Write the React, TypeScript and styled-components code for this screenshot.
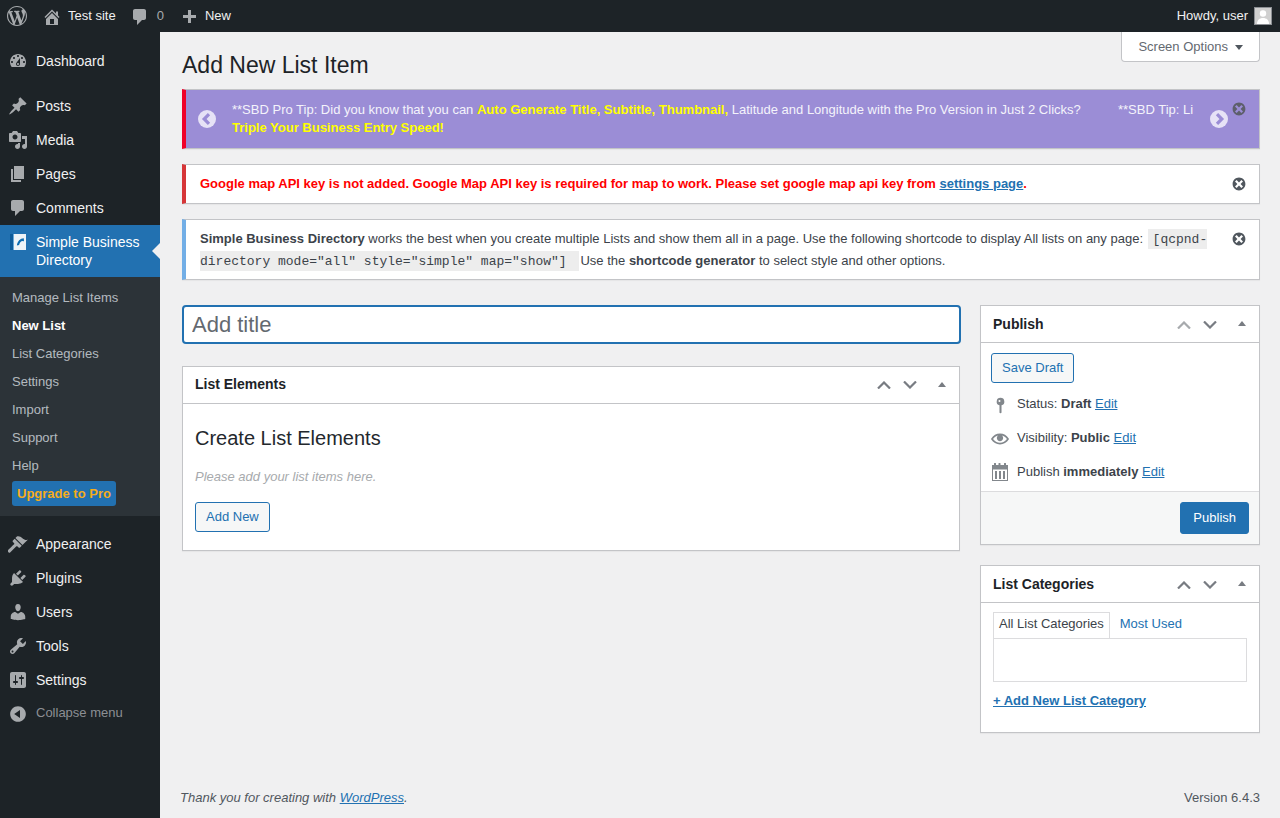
import React from 'react';
import styled, { createGlobalStyle } from 'styled-components';

const GlobalStyle = createGlobalStyle`
    html, body {
        margin: 0;
        padding: 0;
        background: #f0f0f1;
        color: #3c434a;
        font-family: "Liberation Sans", Arial, sans-serif;
        font-size: 13px;
        line-height: 1.4;
        overflow: hidden;
    }
    * { box-sizing: border-box; }
    a { color: #2271b1; }
`;

const paths = {
    logo: 'M20 10c0-5.51-4.49-10-10-10C4.48 0 0 4.49 0 10c0 5.52 4.48 10 10 10 5.51 0 10-4.48 10-10zM7.78 15.37L4.37 6.22c.55-.02 1.17-.08 1.17-.08.5-.06.44-1.13-.06-1.11 0 0-1.45.11-2.37.11-.18 0-.37 0-.58-.01C4.12 2.69 6.87 1.11 10 1.11c2.33 0 4.45.87 6.05 2.34-.68-.11-1.65.39-1.65 1.58 0 .74.45 1.36.9 2.1.35.61.55 1.36.55 2.46 0 1.49-1.4 5-1.4 5l-3.03-8.37c.54-.02.82-.17.82-.17.5-.05.44-1.25-.06-1.22 0 0-1.44.12-2.38.12-.87 0-2.33-.12-2.33-.12-.5-.03-.56 1.2-.06 1.22l.92.08 1.26 3.41zM17.41 10c.24-.64.74-1.87.43-4.25.7 1.29 1.05 2.71 1.05 4.25 0 3.29-1.73 6.24-4.4 7.78.97-2.59 1.94-5.2 2.92-7.78zM6.1 18.09C3.12 16.65 1.11 13.53 1.11 10c0-1.3.23-2.48.72-3.59C3.25 10.3 4.67 14.2 6.1 18.09zm4.03-6.63l2.58 6.98c-.86.29-1.76.45-2.71.45-.79 0-1.57-.11-2.29-.33.81-2.38 1.62-4.74 2.42-7.1z',
    home: 'M16 8.5l1.53 1.53-1.06 1.06L10 4.62l-6.47 6.47-1.06-1.06L10 2.5l4 4v-2h2v4zm-6-2.46l6 5.99V18H4v-5.97zM12 17v-5H8v5h4z',
    comment: 'M5 2h9c1.1 0 2 .9 2 2v7c0 1.1-.9 2-2 2h-2l-5 5v-5H5c-1.1 0-2-.9-2-2V4c0-1.1.9-2 2-2z',
    plus: 'M17 7v3h-5v5H9v-5H4V7h5V2h3v5h5z',
    dashboard: 'M3.76 16h12.48c1.1-1.37 1.76-3.11 1.76-5 0-4.42-3.58-8-8-8s-8 3.58-8 8c0 1.89.66 3.63 1.76 5zM10 4c.55 0 1 .45 1 1s-.45 1-1 1-1-.45-1-1 .45-1 1-1zM6 6c.55 0 1 .45 1 1s-.45 1-1 1-1-.45-1-1 .45-1 1-1zm8 0c.55 0 1 .45 1 1s-.45 1-1 1-1-.45-1-1 .45-1 1-1zm-5.37 5.55L12 7v6c0 1.1-.9 2-2 2s-2-.9-2-2c0-.57.24-1.08.63-1.45zM4 10c.55 0 1 .45 1 1s-.45 1-1 1-1-.45-1-1 .45-1 1-1zm12 0c.55 0 1 .45 1 1s-.45 1-1 1-1-.45-1-1 .45-1 1-1zm-5 3c0-.55-.45-1-1-1s-1 .45-1 1 .45 1 1 1 1-.45 1-1z',
    post: 'M10.44 3.02l1.82-1.82 6.36 6.35-1.83 1.82c-1.05-.68-2.48-.57-3.41.36l-.75.75c-.92.93-1.04 2.35-.35 3.41l-1.83 1.82-2.41-2.41-2.8 2.79c-.42.42-3.38 2.71-3.8 2.29s1.86-3.39 2.28-3.81l2.79-2.79L4.1 9.36l1.83-1.82c1.05.69 2.48.57 3.4-.36l.75-.75c.93-.92 1.05-2.35.36-3.41z',
    media: 'M13 11V4c0-.55-.45-1-1-1h-1.67L9 1H5L3.67 3H2c-.55 0-1 .45-1 1v7c0 .55.45 1 1 1h10c.55 0 1-.45 1-1zM7 4.5c1.38 0 2.5 1.12 2.5 2.5S8.38 9.5 7 9.5 4.5 8.38 4.5 7 5.62 4.5 7 4.5zM14 6h5v10.5c0 1.38-1.12 2.5-2.5 2.5S14 17.88 14 16.5s1.12-2.5 2.5-2.5c.17 0 .34.02.5.05V9h-3V6zm-4 8.05V13h2v3.5c0 1.38-1.12 2.5-2.5 2.5S7 17.88 7 16.5 8.12 14 9.5 14c.17 0 .34.02.5.05z',
    page: 'M6 15V2h10v13H6zm-1 1h8v2H3V5h2v11z',
    appearance: 'M14.48 11.06L7.41 3.99l1.5-1.5c.5-.56 2.3-.47 3.51.32 1.21.8 1.43 1.28 2.91 2.1 1.18.64 2.45 1.26 4.45.85zm-.71.71L6.7 4.7 4.93 6.47c-.39.39-.39 1.02 0 1.41l1.06 1.06c.39.39.39 1.03 0 1.42-.6.6-5.4 5.39-6 6-.39.39-.39 1.02 0 1.41l.71.71c.39.39 1.02.39 1.41 0l6-6c.39-.39 1.03-.39 1.42 0l1.06 1.06c.39.39 1.02.39 1.41 0z',
    plugin: 'M13.11 4.36L9.87 7.6 8 5.73l3.24-3.24c.35-.34 1.05-.2 1.56.32.52.51.66 1.21.31 1.55zm-8 1.77l.91-1.12 9.01 9.01-1.19.84c-.71.71-2.63 1.16-3.82 1.16H6.14L4.9 17.26c-.59.59-1.54.59-2.12 0-.59-.58-.59-1.53 0-2.12l1.24-1.24v-3.88c0-1.13.4-3.19 1.09-3.89zm7.26 3.97l3.24-3.24c.34-.35 1.04-.21 1.55.31.52.51.66 1.21.31 1.55l-3.24 3.25z',
    users: 'M10 9.25c-2.27 0-2.73-3.44-2.73-3.44C7 4.02 7.82 2 9.97 2c2.16 0 2.98 2.02 2.71 3.81 0 0-.41 3.44-2.68 3.44zm0 2.57L12.72 10c2.39 0 4.52 2.33 4.52 4.53v2.49s-3.65 1.13-7.24 1.13c-3.65 0-7.24-1.13-7.24-1.13v-2.49c0-2.25 1.94-4.48 4.47-4.48z',
    tools: 'M16.68 9.77c-1.34 1.34-3.3 1.67-4.95.99l-5.41 6.52c-.99.99-2.59.99-3.58 0s-.99-2.59 0-3.57l6.52-5.42c-.68-1.65-.35-3.61.99-4.95 1.28-1.28 3.12-1.62 4.72-1.06l-2.89 2.89 2.82 2.82 2.86-2.87c.53 1.58.18 3.39-1.08 4.65zM3.81 16.21c.4.39 1.04.39 1.43 0 .4-.4.4-1.04 0-1.43-.39-.4-1.03-.4-1.43 0-.39.39-.39 1.03 0 1.43z',
    settings: 'M18 16V4c0-1.1-.9-2-2-2H4c-1.1 0-2 .9-2 2v12c0 1.1.9 2 2 2h12c1.1 0 2-.9 2-2zM8 11h1c.55 0 1 .45 1 1s-.45 1-1 1H8v1.5c0 .28-.22.5-.5.5s-.5-.22-.5-.5V13H6c-.55 0-1-.45-1-1s.45-1 1-1h1V5.5c0-.28.22-.5.5-.5s.5.22.5.5V11zm5-2h-1c-.55 0-1-.45-1-1s.45-1 1-1h1V5.5c0-.28.22-.5.5-.5s.5.22.5.5V7h1c.55 0 1 .45 1 1s-.45 1-1 1h-1v5.5c0 .28-.22.5-.5.5s-.5-.22-.5-.5V9z',
    collapse: 'M10 2.16c4.33 0 7.84 3.51 7.84 7.84s-3.51 7.84-7.84 7.84S2.16 14.33 2.16 10 5.71 2.16 10 2.16zm2 11.72V6.12L6.18 9.97z',
    dismiss: 'M10 2c4.42 0 8 3.58 8 8s-3.58 8-8 8-8-3.58-8-8 3.58-8 8-8zm5 11l-3-3 3-3-2-2-3 3-3-3-2 2 3 3-3 3 2 2 3-3 3 3z',
    eye: 'M19.7 9.4C17.7 6 14 3.9 10 3.9S2.3 6 .3 9.4L0 10l.3.6c2 3.4 5.7 5.5 9.7 5.5s7.7-2.1 9.7-5.5l.3-.6-.3-.6zM10 14.1c-3.1 0-6-1.6-7.7-4.1C3.6 8 5.7 6.6 8 6.1c-.9.6-1.5 1.7-1.5 2.9 0 1.9 1.6 3.5 3.5 3.5s3.5-1.6 3.5-3.5c0-1.2-.6-2.3-1.5-2.9 2.3.5 4.4 1.9 5.7 3.9-1.7 2.5-4.6 4.1-7.7 4.1z',
    pin: 'M10 1a4.5 4.5 0 0 1 1.2 8.84V18.2c0 .5-.5.8-1.2.8s-1.2-.3-1.2-.8V9.84A4.5 4.5 0 0 1 10 1zM8.8 3.4a1.2 1.2 0 1 0 0 2.4 1.2 1.2 0 0 0 0-2.4z',
    calendar: 'M2 3h2V1.6C4 1 4.4 1 5 1s1 0 1 .6V3h2.5V1.6c0-.6.4-.6 1-.6s1 0 1 .6V3H14V1.6c0-.6.4-.6 1-.6s1 0 1 .6V3h2v16H2zm1 4.5V18h14V7.5zm2 1.5h2v8H5zm4 0h2v8H9zm4 0h2v8h-2z',
};

type IconName = keyof typeof paths;

const Svg = styled.svg<{ $size: number; $color: string }>`
    display: block;
    flex: none;
    width: ${(p) => p.$size}px;
    height: ${(p) => p.$size}px;
    fill: ${(p) => p.$color};
`;

const Icon = ({ name, size = 20, color = '#a7aaad' }: { name: IconName; size?: number; color?: string }) => (
    <Svg viewBox="0 0 20 20" $size={size} $color={color}>
        <path fillRule="evenodd" d={paths[name]} />
    </Svg>
);

const Page = styled.div`
    display: flex;
    flex-direction: column;
    width: 1280px;
    height: 818px;
    overflow: hidden;
`;

const AdminBar = styled.header`
    display: flex;
    flex: none;
    align-items: center;
    justify-content: space-between;
    height: 32px;
    padding: 0 8px 0 7px;
    background: #1d2327;
    color: #f0f0f1;
`;

const BarGroup = styled.div`
    display: flex;
    align-items: center;
`;

const BarItem = styled.div<{ $left: number; $gap: number; $drop: number; $dim?: boolean }>`
    display: flex;
    align-items: center;
    margin-left: ${(p) => p.$left}px;
    gap: ${(p) => p.$gap}px;
    color: ${(p) => (p.$dim ? '#a7aaad' : '#f0f0f1')};
    svg { margin-top: ${(p) => p.$drop}px; }
`;

const Avatar = styled.div`
    width: 18px;
    height: 18px;
    margin-left: 6px;
    border: 1px solid #8c8f94;
    background: #d0d0d0;
`;

const AvatarFigure = styled.svg`
    display: block;
    width: 16px;
    height: 16px;
    fill: #fff;
`;

const Body = styled.div`
    display: flex;
    flex: 1;
    min-height: 0;
`;

const Sidebar = styled.nav`
    flex: none;
    width: 160px;
    padding-top: 12px;
    background: #1d2327;
`;

const MenuRow = styled.div<{ $active?: boolean; $tall?: boolean; $gapAfter?: number }>`
    position: relative;
    display: flex;
    align-items: ${(p) => (p.$tall ? 'flex-start' : 'center')};
    height: ${(p) => (p.$tall ? 52 : 34)}px;
    margin-bottom: ${(p) => p.$gapAfter ?? 0}px;
    padding: ${(p) => (p.$tall ? '8px 8px 0 8px' : '0 8px')};
    background: ${(p) => (p.$active ? '#2271b1' : 'transparent')};
    color: ${(p) => (p.$active ? '#fff' : '#f0f0f1')};
    font-size: 14px;
    line-height: 18px;
`;

const MenuLabel = styled.span`
    margin-left: 8px;
`;

const CurrentArrow = styled.span`
    position: absolute;
    top: 18px;
    right: 0;
    border: 8px solid transparent;
    border-right-color: #f0f0f1;
    border-left-width: 0;
`;

const BrandIcon = styled.svg`
    display: block;
    flex: none;
    width: 20px;
    height: 20px;
    margin-top: -1px;
`;

const SubMenu = styled.div`
    height: 239px;
    margin-bottom: 11px;
    padding: 7px 0 0 12px;
    background: #2c3338;
`;

const SubItem = styled.div<{ $current?: boolean }>`
    display: flex;
    align-items: center;
    height: 28px;
    color: ${(p) => (p.$current ? '#fff' : 'rgba(240, 246, 252, 0.7)')};
    font-weight: ${(p) => (p.$current ? 600 : 400)};
`;

const UpgradeBadge = styled.div`
    display: inline-block;
    margin-top: 1px;
    padding: 0 5px;
    border-radius: 3px;
    background: #2271b1;
    color: #f5ac1c;
    font-weight: 700;
    line-height: 25px;
`;

const CollapseRow = styled.div`
    display: flex;
    align-items: center;
    height: 33px;
    padding: 0 8px;
    color: #8c8f94;
`;

const CollapseLabel = styled.span`
    margin-left: 8px;
`;

const Content = styled.main`
    display: flex;
    flex: 1;
    flex-direction: column;
    min-width: 0;
    padding: 0 20px 0 22px;
`;

const HeadRow = styled.div`
    display: flex;
    align-items: flex-start;
    justify-content: space-between;
    height: 57px;
`;

const Title = styled.h1`
    margin: 18px 0 0;
    color: #1d2327;
    font-size: 23px;
    font-weight: 400;
    line-height: 30px;
`;

const ScreenOptions = styled.div`
    display: flex;
    align-items: center;
    gap: 7px;
    height: 30px;
    padding: 1px 16px 0;
    border: 1px solid #c3c4c7;
    border-top: 0;
    border-radius: 0 0 4px 4px;
    background: #fff;
    color: #646970;
`;

const Caret = styled.span`
    border-top: 5px solid #50575e;
    border-right: 4px solid transparent;
    border-left: 4px solid transparent;
`;

const Notice = styled.div<{ $accent: string; $bg?: string; $height: number }>`
    position: relative;
    display: flex;
    align-items: center;
    height: ${(p) => p.$height}px;
    margin-bottom: 15px;
    border: 1px solid #c3c4c7;
    border-left: 4px solid ${(p) => p.$accent};
    background: ${(p) => p.$bg ?? '#fff'};
    box-shadow: 0 1px 1px rgba(0, 0, 0, 0.04);
`;

const NoticeText = styled.p`
    margin: 0;
    padding: 0 38px 0 14px;
`;

const ShortcodeText = styled(NoticeText)`
    padding-right: 48px;
    line-height: 21px;
`;

const ErrorText = styled.strong`
    color: #f00;
    a { color: #2271b1; }
`;

const Code = styled.code`
    margin: 0 1px;
    padding: 3px 5px 2px;
    background: rgba(0, 0, 0, 0.07);
    font-family: "Liberation Mono", monospace;
    font-size: 13px;
`;

const Dismiss = styled.div`
    position: absolute;
    top: 11px;
    right: 12px;
`;

const CarouselArrow = styled.svg`
    display: block;
    flex: none;
    width: 18px;
    height: 18px;
    margin-left: 12px;
`;

const RightCarouselArrow = styled(CarouselArrow)`
    margin-left: 17px;
    margin-right: 31px;
`;

const Track = styled.div`
    display: flex;
    flex: 1;
    gap: 20px;
    min-width: 0;
    margin-left: 16px;
    overflow: hidden;
    color: #f4f3fb;
    line-height: 18px;
`;

const Slide = styled.div`
    flex: none;
    width: 866px;
`;

const LastSlide = styled.div`
    flex: none;
    white-space: nowrap;
`;

const Highlight = styled.strong`
    color: #ff0;
`;

const Columns = styled.div`
    display: grid;
    grid-template-columns: minmax(0, 1fr) 280px;
    gap: 20px;
    margin-top: 10px;
`;

const MainColumn = styled.div`
    display: flex;
    flex-direction: column;
    gap: 22px;
`;

const SideColumn = styled.div`
    display: flex;
    flex-direction: column;
    gap: 20px;
`;

const TitleInput = styled.input`
    width: calc(100% + 1px);
    height: 39px;
    padding: 3px 8px;
    border: 2px solid #2271b1;
    border-radius: 4px;
    background: #fff;
    color: #2c3338;
    font-family: inherit;
    font-size: 22px;
    outline: none;
    &::placeholder { color: #646970; opacity: 1; }
`;

const Postbox = styled.section<{ $height: number }>`
    display: flex;
    flex-direction: column;
    height: ${(p) => p.$height}px;
    border: 1px solid #c3c4c7;
    background: #fff;
    box-shadow: 0 1px 1px rgba(0, 0, 0, 0.04);
`;

const PostboxHead = styled.div<{ $side?: boolean }>`
    display: flex;
    flex: none;
    align-items: center;
    height: 37px;
    padding: ${(p) => (p.$side ? '1px' : '0')} 13px 0 12px;
    border-bottom: 1px solid #c3c4c7;
`;

const PostboxTitle = styled.h2`
    flex: 1;
    margin: 0;
    color: #1d2327;
    font-size: 14px;
    font-weight: 600;
`;

const Chevron = styled.svg<{ $faded?: boolean }>`
    display: block;
    width: 14px;
    height: 8px;
    margin-right: 12px;
    fill: none;
    stroke: ${(p) => (p.$faded ? '#a7aaad' : '#787c82')};
    stroke-width: 2.2;
`;

const ToggleCaret = styled.span`
    margin: 0 0 2px 9px;
    border-bottom: 5px solid #787c82;
    border-right: 4px solid transparent;
    border-left: 4px solid transparent;
`;

const ElementsBody = styled.div`
    padding: 21px 12px 0;
`;

const ElementsTitle = styled.h3`
    margin: 0;
    color: #23282d;
    font-size: 20px;
    font-weight: 400;
    line-height: 26px;
`;

const Hint = styled.p`
    margin: 16px 0 0;
    color: #a7aaad;
    font-style: italic;
    line-height: 20px;
`;

const OutlineButton = styled.button`
    display: block;
    height: 30px;
    padding: 0 10px 2px;
    border: 1px solid #2271b1;
    border-radius: 3px;
    background: #f6f7f7;
    color: #2271b1;
    font-family: inherit;
    font-size: 13px;
`;

const AddNewButton = styled(OutlineButton)`
    margin-top: 15px;
`;

const PublishBody = styled.div`
    flex: 1;
    padding: 10px 10px 0;
`;

const MetaList = styled.div`
    margin-top: 4px;
`;

const MetaRow = styled.div`
    display: flex;
    align-items: center;
    height: 34px;
`;

const MetaSlot = styled.div<{ $drop: number }>`
    display: flex;
    flex: none;
    justify-content: center;
    width: 18px;
    margin: ${(p) => p.$drop}px 8px 0 0;
`;

const PublishFoot = styled.div`
    display: flex;
    flex: none;
    justify-content: flex-end;
    height: 53px;
    padding: 10px 10px 0;
    border-top: 1px solid #dcdcde;
    background: #f6f7f7;
`;

const PrimaryButton = styled.button`
    height: 32px;
    padding: 0 12px 2px;
    border: 1px solid #2271b1;
    border-radius: 3px;
    background: #2271b1;
    color: #fff;
    font-family: inherit;
    font-size: 13px;
`;

const CategoriesBody = styled.div`
    padding: 9px 12px 0;
`;

const Tabs = styled.div`
    display: flex;
    align-items: stretch;
    height: 26px;
`;

const ActiveTab = styled.div`
    display: flex;
    align-items: center;
    padding: 0 5px 2px;
    border: 1px solid #dcdcde;
    border-bottom: 0;
    color: #3c434a;
`;

const Tab = styled.a`
    display: flex;
    align-items: center;
    padding: 0 9px 2px 10px;
    color: #2271b1;
`;

const TabPanel = styled.div`
    height: 44px;
    border: 1px solid #dcdcde;
    background: #fff;
`;

const AddCategory = styled.a`
    display: inline-block;
    margin-top: 10px;
    font-weight: 600;
    line-height: 18px;
    text-decoration: underline;
`;

const Footer = styled.footer`
    display: flex;
    justify-content: space-between;
    margin: auto 0 11px -2px;
    color: #50575e;
    line-height: 18px;
`;

const Move = ({ dir, faded }: { dir: 'up' | 'down'; faded?: boolean }) => (
    <Chevron viewBox="0 0 14 8" $faded={faded}>
        <path d={dir === 'up' ? 'M1 7.5 7 1.5l6 6' : 'M1 .5l6 6 6-6'} />
    </Chevron>
);

const BoxHead = ({ title, faded, side }: { title: string; faded?: boolean; side?: boolean }) => (
    <PostboxHead $side={side}>
        <PostboxTitle>{title}</PostboxTitle>
        <Move dir="up" faded={faded} />
        <Move dir="down" />
        <ToggleCaret />
    </PostboxHead>
);

const menuTop: { icon: IconName; label: string; gapAfter?: number }[] = [
    { icon: 'dashboard', label: 'Dashboard', gapAfter: 11 },
    { icon: 'post', label: 'Posts' },
    { icon: 'media', label: 'Media' },
    { icon: 'page', label: 'Pages' },
    { icon: 'comment', label: 'Comments' },
];

const menuBottom: { icon: IconName; label: string }[] = [
    { icon: 'appearance', label: 'Appearance' },
    { icon: 'plugin', label: 'Plugins' },
    { icon: 'users', label: 'Users' },
    { icon: 'tools', label: 'Tools' },
    { icon: 'settings', label: 'Settings' },
];

const subItems = ['Manage List Items', 'New List', 'List Categories', 'Settings', 'Import', 'Support', 'Help'];

const App: React.FC = () => (
    <Page>
        <GlobalStyle />
        <AdminBar>
            <BarGroup>
                <Icon name="logo" color="#a7aaad" />
                <BarItem $left={15} $gap={6} $drop={1}>
                    <Icon name="home" />
                    Test site
                </BarItem>
                <BarItem $left={14} $gap={7} $drop={2} $dim>
                    <Icon name="comment" />
                    0
                </BarItem>
                <BarItem $left={15} $gap={6} $drop={4}>
                    <Icon name="plus" />
                    New
                </BarItem>
            </BarGroup>
            <BarGroup>
                Howdy, user
                <Avatar>
                    <AvatarFigure viewBox="0 0 16 16">
                        <circle cx="8" cy="5.5" r="3.2" />
                        <path d="M2 16c0-4 2.5-6 6-6s6 2 6 6z" />
                    </AvatarFigure>
                </Avatar>
            </BarGroup>
        </AdminBar>
        <Body>
            <Sidebar>
                {menuTop.map((item) => (
                    <MenuRow key={item.label} $gapAfter={item.gapAfter}>
                        <Icon name={item.icon} />
                        <MenuLabel>{item.label}</MenuLabel>
                    </MenuRow>
                ))}
                <MenuRow $active $tall>
                    <BrandIcon viewBox="0 0 20 20">
                        <rect x="2" y="2" width="16" height="16" fill="#eef3f7" />
                        <rect x="2" y="2" width="3" height="16" fill="#0f5b99" />
                        <rect x="5" y="2" width="1" height="16" fill="#6aa9d8" />
                        <path d="M15.8 6.2c-3.4.2-6.6 3-6.9 7.4l2.2-.6c.3-2 1.5-3.5 3-4.1l1.9.3z" fill="#0f6cb0" />
                    </BrandIcon>
                    <MenuLabel>Simple Business Directory</MenuLabel>
                    <CurrentArrow />
                </MenuRow>
                <SubMenu>
                    {subItems.map((label) => (
                        <SubItem key={label} $current={label === 'New List'}>{label}</SubItem>
                    ))}
                    <UpgradeBadge>Upgrade to Pro</UpgradeBadge>
                </SubMenu>
                {menuBottom.map((item) => (
                    <MenuRow key={item.label}>
                        <Icon name={item.icon} />
                        <MenuLabel>{item.label}</MenuLabel>
                    </MenuRow>
                ))}
                <CollapseRow>
                    <Icon name="collapse" />
                    <CollapseLabel>Collapse menu</CollapseLabel>
                </CollapseRow>
            </Sidebar>
            <Content>
                <HeadRow>
                    <Title>Add New List Item</Title>
                    <ScreenOptions>
                        Screen Options
                        <Caret />
                    </ScreenOptions>
                </HeadRow>
                <Notice $accent="#f0002a" $bg="#9b8dd6" $height={60}>
                    <CarouselArrow viewBox="0 0 18 18">
                        <circle cx="9" cy="9" r="9" fill="#e6e2f6" />
                        <path d="M11 4.2 6.2 9l4.8 4.8" fill="none" stroke="#9b8dd6" strokeWidth="3.2" />
                    </CarouselArrow>
                    <Track>
                        <Slide>
                            **SBD Pro Tip: Did you know that you can <Highlight>Auto Generate Title, Subtitle, Thumbnail,</Highlight> Latitude and Longitude with the Pro Version in Just 2 Clicks? <Highlight>Triple Your Business Entry Speed!</Highlight>
                        </Slide>
                        <LastSlide>**SBD Tip: Li</LastSlide>
                    </Track>
                    <RightCarouselArrow viewBox="0 0 18 18">
                        <circle cx="9" cy="9" r="9" fill="#e6e2f6" />
                        <path d="M7 4.2 11.8 9 7 13.8" fill="none" stroke="#9b8dd6" strokeWidth="3.2" />
                    </RightCarouselArrow>
                    <Dismiss><Icon name="dismiss" size={16} color="#5d5f6b" /></Dismiss>
                </Notice>
                <Notice $accent="#d63638" $height={40}>
                    <NoticeText>
                        <ErrorText>Google map API key is not added. Google Map API key is required for map to work. Please set google map api key from <a href="#settings">settings page</a>.</ErrorText>
                    </NoticeText>
                    <Dismiss><Icon name="dismiss" size={16} color="#50575e" /></Dismiss>
                </Notice>
                <Notice $accent="#72aee6" $height={61}>
                    <ShortcodeText>
                        <strong>Simple Business Directory</strong> works the best when you create multiple Lists and show them all in a page. Use the following shortcode to display All lists on any page: <Code>[qcpnd-directory mode="all" style="simple" map="show"] </Code> Use the <strong>shortcode generator</strong> to select style and other options.
                    </ShortcodeText>
                    <Dismiss><Icon name="dismiss" size={16} color="#50575e" /></Dismiss>
                </Notice>
                <Columns>
                    <MainColumn>
                        <TitleInput placeholder="Add title" readOnly />
                        <Postbox $height={185}>
                            <BoxHead title="List Elements" />
                            <ElementsBody>
                                <ElementsTitle>Create List Elements</ElementsTitle>
                                <Hint>Please add your list items here.</Hint>
                                <AddNewButton>Add New</AddNewButton>
                            </ElementsBody>
                        </Postbox>
                    </MainColumn>
                    <SideColumn>
                        <Postbox $height={240}>
                            <BoxHead title="Publish" faded side />
                            <PublishBody>
                                <OutlineButton>Save Draft</OutlineButton>
                                <MetaList>
                                    <MetaRow>
                                        <MetaSlot $drop={2}><Icon name="pin" size={17} color="#82878c" /></MetaSlot>
                                        <span>Status: <strong>Draft</strong> <a href="#edit">Edit</a></span>
                                    </MetaRow>
                                    <MetaRow>
                                        <MetaSlot $drop={2}><Icon name="eye" size={18} color="#82878c" /></MetaSlot>
                                        <span>Visibility: <strong>Public</strong> <a href="#edit">Edit</a></span>
                                    </MetaRow>
                                    <MetaRow>
                                        <MetaSlot $drop={0}><Icon name="calendar" size={20} color="#82878c" /></MetaSlot>
                                        <span>Publish <strong>immediately</strong> <a href="#edit">Edit</a></span>
                                    </MetaRow>
                                </MetaList>
                            </PublishBody>
                            <PublishFoot>
                                <PrimaryButton>Publish</PrimaryButton>
                            </PublishFoot>
                        </Postbox>
                        <Postbox $height={168}>
                            <BoxHead title="List Categories" side />
                            <CategoriesBody>
                                <Tabs>
                                    <ActiveTab>All List Categories</ActiveTab>
                                    <Tab>Most Used</Tab>
                                </Tabs>
                                <TabPanel />
                                <AddCategory href="#add">+ Add New List Category</AddCategory>
                            </CategoriesBody>
                        </Postbox>
                    </SideColumn>
                </Columns>
                <Footer>
                    <em>Thank you for creating with <a href="#wp">WordPress</a>.</em>
                    <span>Version 6.4.3</span>
                </Footer>
            </Content>
        </Body>
    </Page>
);

export default App;
